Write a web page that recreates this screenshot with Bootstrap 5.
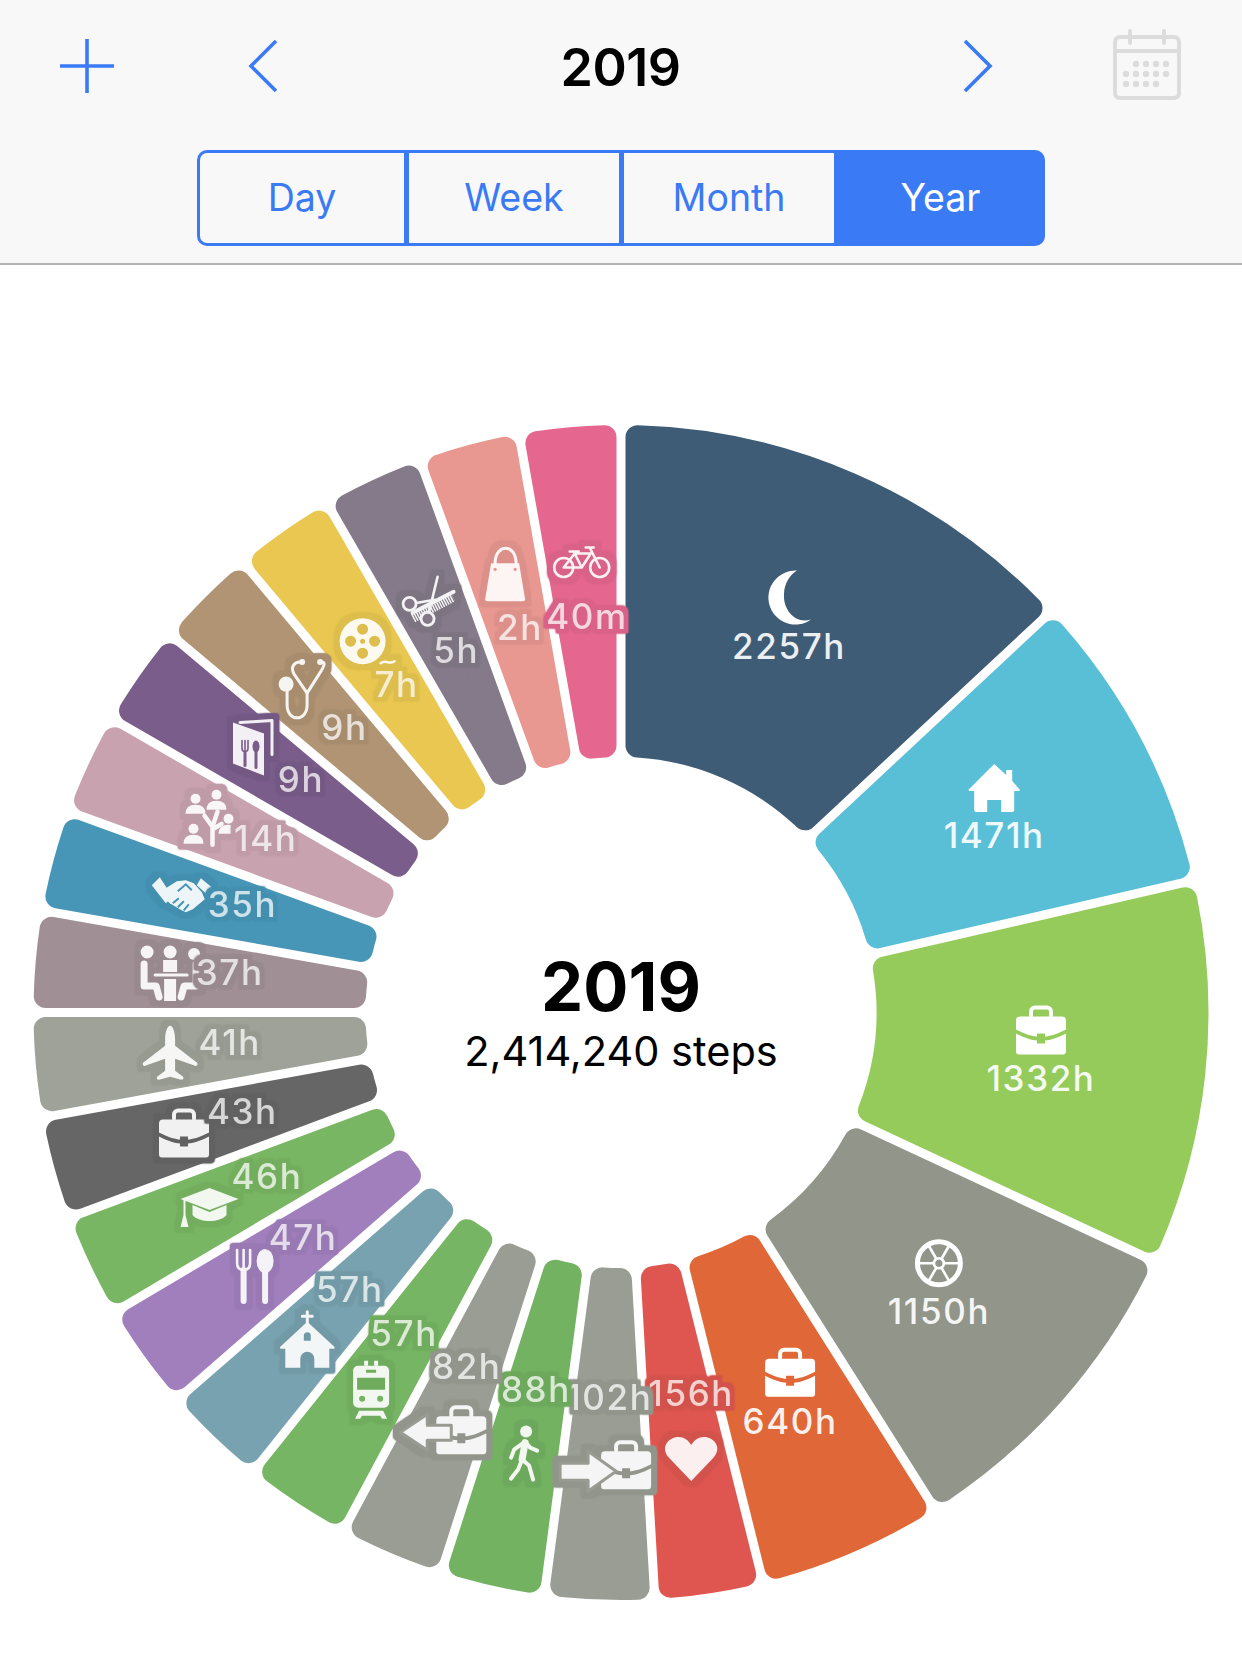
<!DOCTYPE html>
<html lang="en">
<head>
  <meta charset="UTF-8">
  <title>2019</title>
  <link href="https://cdn.jsdelivr.net/npm/bootstrap@5.3.0/dist/css/bootstrap.min.css" rel="stylesheet">
  <style>
    body { background: #fff; font-family: Inter, "Liberation Sans", sans-serif; width: 1242px; }
    .top-bar { background: #f8f8f8; border-bottom: 2px solid #b4b4b4; height: 265px; padding-top: 31px; }
    .top-row { height: 70px; padding: 0 60px; }
    .top-row svg { overflow: visible; }
    .chev-prev { margin-left: 136px; }
    .cal-icon { margin-left: 121px; }
    .top-title { font-size: 52px; font-weight: 600; color: #000; line-height: 70px; letter-spacing: -.5px; padding-top: 4px; }
    .seg { width: 848px; height: 96px; margin-top: 49px; }
    .seg .btn {
      --bs-btn-color: #3a7af5; --bs-btn-border-color: #3a7af5;
      --bs-btn-active-bg: #3a7af5; --bs-btn-active-border-color: #3a7af5;
      --bs-btn-border-radius: 10px; --bs-btn-border-width: 3px;
      font-size: 37.5px; flex: 1 1 0; display: flex; align-items: center; justify-content: center; padding: 0;
    }
    .seg .btn:first-child { flex: 0 0 210px; }
    .seg .btn:last-child { flex: 0 0 209px; }
    .chart { display: block; }
    .lbl { font-family: Inter, "Liberation Sans", sans-serif; font-size: 35px; font-weight: 500; text-anchor: middle; dominant-baseline: central; letter-spacing: 1.6px; }
    .big-year { font-family: Inter, "Liberation Sans", sans-serif; font-size: 67px; font-weight: 700; text-anchor: middle; }
    .steps { font-family: Inter, "Liberation Sans", sans-serif; font-size: 41.5px; text-anchor: middle; }
  </style>
</head>
<body>
  <div class="top-bar">
    <div class="top-row d-flex align-items-center">
      <svg width="54" height="54" viewBox="0 0 54 54" fill="none" stroke="#3a7af5" stroke-width="3.6"><path d="M27 0V54M0 27H54"/></svg>
      <svg class="chev-prev" width="27" height="52" viewBox="0 0 27 52" fill="none" stroke="#3a7af5" stroke-width="3.6"><path d="M26 1L1 26L26 51"/></svg>
      <div class="top-title flex-grow-1 text-center">2019</div>
      <svg width="27" height="52" viewBox="0 0 27 52" fill="none" stroke="#3a7af5" stroke-width="3.6"><path d="M1 1L26 26L1 51"/></svg>
      <svg class="cal-icon" width="70" height="70" viewBox="0 0 70 70">
        <g fill="none" stroke="#dcdcdc" stroke-width="4">
          <rect x="3" y="6" width="64" height="61" rx="5"/>
          <path d="M3 20H67"/>
          <path d="M18 0V12M52 0V12" stroke-linecap="round"/>
        </g>
        <g id="calDots" fill="#dcdcdc"></g>
      </svg>
    </div>
    <div class="btn-group seg d-flex mx-auto" role="group">
      <button type="button" class="btn btn-outline-primary">Day</button>
      <button type="button" class="btn btn-outline-primary">Week</button>
      <button type="button" class="btn btn-outline-primary">Month</button>
      <button type="button" class="btn btn-outline-primary active">Year</button>
    </div>
  </div>

  <svg id="chart" class="chart" width="1242" height="1403" viewBox="0 265 1242 1403"></svg>

  <script src="https://cdn.jsdelivr.net/npm/bootstrap@5.3.0/dist/js/bootstrap.bundle.min.js"></script>
  <script>
    const CX = 621, CY = 1012.5, R = 587.5, RI = 255.5, GAP = 9, CORNER = 12;
    const S = 1242 / 1168; // label positions were read off a 1168 wide copy

    // calendar dots
    let dots = "";
    [[1,2,3,4],[0,1,2,3,4],[0,1,2,3]].forEach((row, r) => row.forEach(c => {
      dots += `<circle cx="${14 + c * 10}" cy="${33 + r * 10}" r="3.2"/>`;
    }));
    document.getElementById("calDots").innerHTML = dots;

    // icons, drawn around 0,0. c is the segment colour, for cut-outs
    const line = (d, w) => `<path d="${d}" fill="none" stroke="#fff" stroke-width="${w}" stroke-linecap="round" stroke-linejoin="round"/>`;
    const caseShape = c => line("M-10-15V-19a4 4 0 0 1 4-4H6a4 4 0 0 1 4 4V-15", 4) +
      `<path d="M-25-10a4 4 0 0 1 4-4H21a4 4 0 0 1 4 4V-1C15 4 8 6 4 6V3H-4V6C-8 6-15 4-25-1Z"/>` +
      `<path d="M-25 3C-15 8-9 9.5-4 10V13H4V10C9 9.5 15 8 25 3V21a3 3 0 0 1-3 3H-22a3 3 0 0 1-3-3Z"/>`;
    const person = (x, y) => `<circle cx="${x}" cy="${y - 6}" r="5"/><path d="M${x - 10} ${y + 9}Q${x - 10} ${y} ${x} ${y}Q${x + 10} ${y} ${x + 10} ${y + 9}Z"/>`;

    const icons = {
      moon: () => `<path d="M8-27A27 27 0 1 0 22 22C6 27-6 12-5-3-5-14 1-23 8-27Z"/>`,
      house: () => `<path d="M0-24L12-13V-18H18V-7L25 1a1 1 0 0 1-1 2H20V22a2 2 0 0 1-2 2H7V12H-7V24H-18a2 2 0 0 1-2-2V3H-24a1 1 0 0 1-1-2Z"/>`,
      briefcase: caseShape,
      wheel: () => `<circle r="21.5" fill="none" stroke="#fff" stroke-width="5"/><circle r="5" fill="none" stroke="#fff" stroke-width="2.6"/>` +
        line("M5 0H20M-5 0H-20M2.5 4.3L10 17.3M-2.5-4.3L-10-17.3M2.5-4.3L10-17.3M-2.5 4.3L-10 17.3", 2.6),
      heart: () => `<path d="M0 22L-22-1C-32-12-22-22-13-22-7-22-3-19 0-14 3-19 7-22 13-22 22-22 32-12 22-1Z"/>`,
      caseIn: c => `<g transform="translate(20 0)">${caseShape(c)}</g>` +
        `<path d="M-46-2H-18V-14L10 6-18 26V15H-46Z" stroke="${c}" stroke-width="3" stroke-linejoin="round"/>`,
      caseOut: c => `<g transform="translate(20 0)">${caseShape(c)}</g>` +
        `<path d="M-41 2L-14-16V-5H10V10H-14V20Z" stroke="${c}" stroke-width="3" stroke-linejoin="round"/>`,
      walker: () => `<circle cx="4" cy="-22" r="6"/>` + line("M3-11L0 6", 7) +
        line("M3-12L-8-4-11 4M3-12L8-6 15-3M0 6L7 12 11 26M0 6L-4 16-11 25", 4),
      train: c => `<path fill-rule="evenodd" d="M-13-24H13a5 5 0 0 1 5 5V13a5 5 0 0 1-5 5H-13a5 5 0 0 1-5-5V-19a5 5 0 0 1 5-5ZM-14-12V0H14V-12ZM-5-20V-17H5V-20Z"/>` +
        `<circle cx="-9" cy="9" r="3" fill="${c}"/><circle cx="9" cy="9" r="3" fill="${c}"/>` +
        `<path d="M-7-29H-3V-24H-7ZM3-29H7V-24H3Z"/><path d="M-12 21H12L16 29H11L9 26H-9L-11 29H-16Z"/>`,
      church: () => `<path fill-rule="evenodd" d="M0-18L27 7a1.2 1.2 0 0 1-1 2H22V28H7V19a7 7 0 0 0-14 0V28H-22V9H-26a1.2 1.2 0 0 1-1-2ZM-3.5-4V1H3.5V-4a3.5 3.5 0 0 0-7 0Z"/>` + line("M0-28V-17M-5-23.500H5", 3),
      cutlery: () => line("M-17-26V-13Q-17-6-10.500-6T-4-13V-26M-10.500-26V-8", 2.6) + line("M-10.500-6V25", 6) +
        `<ellipse cx="11" cy="-15" rx="8.500" ry="12"/>` + line("M11-6V25", 6),
      cap: () => `<path d="M0-19L29-8 0 3-29-8Z"/><path d="M-17-2L0 5 17-2V8C10 16-10 16-17 8Z"/><path d="M-26-7H-24V8L-21 20H-29L-26 8Z"/>`,
      plane: () => `<path d="M0-27C3-27 5-20 5-13V-7L27 10C28 11 27 14 25 13L5 6V18L13 24C14 26 13 27 11 27L0 24-11 27C-13 27-14 26-13 24L-5 18V6L-25 13C-27 14-28 11-27 10L-5-7V-13C-5-20-3-27 0-27Z"/>`,
      meeting: () => `<circle cx="-23" cy="-21" r="6.500"/><circle cx="0" cy="-21" r="6.500"/><circle cx="24" cy="-19" r="6"/>` +
        `<path d="M-7-13H7V-1H-7Z"/>` + line("M-15 2H17", 3) + line("M-26-9V13H-14L-11 24", 7) + line("M26-9V13H14L11 24", 7) + `<path d="M-6 6H6V28H-6Z"/>`,
      hands: c => `<path d="M-30-10L-22-18-9 2-16 8Z"/><path d="M19-17L30-8 25-1 15-10Z"/>` +
        `<path d="M-16-7L-5-14 4-15 12-12 20-3 23 4 11 14 4 17-2 14-12 8-19 1Z"/>` +
        `<path d="M-4-4L4-11 10-5M-9 8L-3 3M-4 12L2 6M2 15L7 9" fill="none" stroke="${c}" stroke-width="2"/>`,
      tree: () => person(7, -18) + person(-14, -14) + person(19, 6) + person(-16, 16) +
        line("M3 26V8L-5-3M3 8L8-7M4 10L12 5", 4.5),
      menu: c => line("M-12-25L20-27V7", 3) + `<path d="M-19-25L12-14V28L-19 16Z"/>` +
        `<g fill="none" stroke="${c}" stroke-linecap="round"><path d="M-10-7V1Q-10 4-7 4T-4 1V-7M-7-7V2" stroke-width="1.600"/><path d="M-7 4V18" stroke-width="3"/><path d="M4-2V20" stroke-width="3"/></g><ellipse cx="4" cy="-1" rx="3.500" ry="6" fill="${c}"/>`,
      stetho: () => `<circle cx="-18" cy="-5" r="7.500"/>` +
        line("M-2-27C-10-28-14-22-10-15L3 4 15-15C21-24 22-28 16-27", 3) + line("M3 4V16C3 33-17 33-17 16V-4", 3) +
        `<circle cx="-2" cy="-27" r="3"/><circle cx="16" cy="-27" r="3"/>`,
      reel: c => `<path fill-rule="evenodd" d="M-23 0a23 23 0 1 0 46 0a23 23 0 1 0-46 0ZM-5.500-12a5.500 5.500 0 1 0 11 0a5.500 5.500 0 1 0-11 0ZM-5.500 12a5.500 5.500 0 1 0 11 0a5.500 5.500 0 1 0-11 0ZM-17.500 0a5.500 5.500 0 1 0 11 0a5.500 5.500 0 1 0-11 0ZM6.500 0a5.500 5.500 0 1 0 11 0a5.500 5.500 0 1 0-11 0ZM-2.500 0a2.500 2.500 0 1 0 5 0a2.500 2.500 0 1 0-5 0Z"/>` +
        line("M18 22C24 18 26 24 32 20", 2.5),
      scissors: c => line("M-17 12L24-9", 4) + `<path d="M-18 14L22-7" fill="none" stroke="#fff" stroke-width="9" stroke-dasharray="1.500 1" transform="translate(1.500 3.500)"/>` +
        line("M8-24L-1 13M-12 2L5-1", 2.6) + `<circle cx="-20" cy="3" r="6.500" fill="${c}" stroke="#fff" stroke-width="2.800"/><circle cx="-2" cy="18" r="6.500" fill="${c}" stroke="#fff" stroke-width="2.800"/>`,
      bag: c => line("M-10-8V-12C-10-32 11-32 11-12V-8", 3) + `<path d="M-14-12H14L20 24a2 2 0 0 1-2 2H-18a2 2 0 0 1-2-2Z"/>` +
        `<circle cx="-10" cy="-6" r="1.600" fill="${c}"/><circle cx="10" cy="-6" r="1.600" fill="${c}"/>`,
      bike: () => `<g fill="none" stroke="#fff" stroke-width="2.600" stroke-linecap="round" stroke-linejoin="round"><circle cx="-18" cy="6" r="9.500"/><circle cx="18" cy="6" r="9.500"/><path d="M-18 6L-7-8H9M8-14L18 6M-8-10L0 6H-18M0 6L9-8M-12-10H-3M4-14H12"/></g>`
    };

    // a: where the segment ends, clockwise from 12 o'clock. ix,iy and lx,ly on the 1168 copy
    const segs = [
      { a: 47, c: "#3e5c76", t: "2257h", i: "moon", ix: 742, iy: 562, lx: 742, ly: 607 },
      { a: 77, c: "#59bfd7", t: "1471h", i: "house", ix: 935, iy: 741, lx: 935, ly: 785 },
      { a: 115, c: "#94cb5a", t: "1332h", i: "briefcase", ix: 979, iy: 969, lx: 979, ly: 1014 },
      { a: 147.7, c: "#92958a", t: "1150h", i: "wheel", ix: 883, iy: 1188, lx: 883, ly: 1233 },
      { a: 166, c: "#e06737", t: "640h", i: "briefcase", ix: 743, iy: 1291, lx: 743, ly: 1336 },
      { a: 176.7, c: "#df5650", t: "156h", i: "heart", ix: 650, iy: 1372, lx: 650, ly: 1310 },
      { a: 187.5, c: "#9a9d93", t: "102h", i: "caseIn", ix: 570, iy: 1378, lx: 573, ly: 1314 },
      { a: 197.8, c: "#72b261", t: "88h", i: "walker", ix: 491, iy: 1367, lx: 504, ly: 1306 },
      { a: 208.2, c: "#9a9d93", t: "82h", i: "caseOut", ix: 415, iy: 1345, lx: 439, ly: 1285 },
      { a: 218.7, c: "#76b563", t: "57h", i: "train", ix: 349, iy: 1307, lx: 380, ly: 1254 },
      { a: 228.9, c: "#78a2af", t: "57h", i: "church", ix: 289, iy: 1260, lx: 329, ly: 1212 },
      { a: 239.4, c: "#a17fbc", t: "47h", i: "cutlery", ix: 239, iy: 1200, lx: 285, ly: 1163 },
      { a: 249.6, c: "#79b663", t: "46h", i: "cap", ix: 197, iy: 1135, lx: 251, ly: 1106 },
      { a: 259.7, c: "#666666", t: "43h", i: "briefcase", ix: 173, iy: 1066, lx: 228, ly: 1045 },
      { a: 270, c: "#9fa298", t: "41h", i: "plane", ix: 160, iy: 990, lx: 216, ly: 980 },
      { a: 280, c: "#a09095", t: "37h", i: "meeting", ix: 160, iy: 915, lx: 216, ly: 914 },
      { a: 290, c: "#4796b8", t: "35h", i: "hands", ix: 171, iy: 842, lx: 228, ly: 850 },
      { a: 300, c: "#c9a2b0", t: "14h", i: "tree", ix: 197, iy: 770, lx: 250, ly: 788 },
      { a: 310, c: "#7a5d8b", t: "9h", i: "menu", ix: 237, iy: 703, lx: 283, ly: 733 },
      { a: 320, c: "#b09474", t: "9h", i: "stetho", ix: 286, iy: 648, lx: 324, ly: 684 },
      { a: 330, c: "#e9c750", t: "7h", i: "reel", ix: 341, iy: 603, lx: 373, ly: 643 },
      { a: 340, c: "#847a89", t: "5h", i: "scissors", ix: 404, iy: 565, lx: 429, ly: 611 },
      { a: 350, c: "#e89890", t: "2h", i: "bag", ix: 475, iy: 541, lx: 489, ly: 590 },
      { a: 360, c: "#e5668f", t: "40m", i: "bike", ix: 547, iy: 528, lx: 552, ly: 579 }
    ];

    const pt = (rad, deg) => {
      const t = deg * Math.PI / 180;
      return (CX + rad * Math.sin(t)).toFixed(2) + " " + (CY - rad * Math.cos(t)).toFixed(2);
    };

    // the wedge is shrunk by the corner radius, the round stroke grows it back with round corners
    function wedge(a0, a1) {
      const ro = R - CORNER, ri = RI + CORNER, off = GAP / 2 + CORNER;
      const dO = Math.asin(off / ro) * 180 / Math.PI, dI = Math.asin(off / ri) * 180 / Math.PI;
      const large = a1 - a0 > 180 ? 1 : 0;
      return `M${pt(ro, a0 + dO)}A${ro} ${ro} 0 ${large} 1 ${pt(ro, a1 - dO)}L${pt(ri, a1 - dI)}A${ri} ${ri} 0 ${large} 0 ${pt(ri, a0 + dI)}Z`;
    }

    function darker(hex, f) {
      const n = parseInt(hex.slice(1), 16);
      const ch = s => Math.round(((n >> s) & 255) * f).toString(16).padStart(2, "0");
      return "#" + ch(16) + ch(8) + ch(0);
    }

    function halo(id, color, box, rad) {
      return `<filter id="${id}" x="${box[0]}" y="${box[1]}" width="${box[2]}" height="${box[3]}" color-interpolation-filters="sRGB">
        <feMorphology in="SourceAlpha" operator="dilate" radius="${rad}"/>
        <feGaussianBlur stdDeviation="1.2"/>
        <feComponentTransfer result="s"><feFuncA type="linear" slope="3"/></feComponentTransfer>
        <feFlood flood-color="${color}"/>
        <feComposite in2="s" operator="in" result="h"/>
        <feMerge><feMergeNode in="h"/><feMergeNode in="SourceGraphic"/></feMerge>
      </filter>`;
    }

    let defs = "", shapes = "", marks = "", start = 0;
    segs.forEach((s, n) => {
      shapes += `<path d="${wedge(start, s.a)}" fill="${s.c}" stroke="${s.c}" stroke-width="${CORNER * 2}" stroke-linejoin="round"/>`;
      start = s.a;
      const small = n > 4;
      if (small) {
        const h = darker(s.c, .95);
        defs += halo("ht" + n, h, [-.1, -.04, 1.2, 1.08], 4) + halo("hi" + n, h, [-.35, -.35, 1.7, 1.7], 5);
      }
      const draw = icons[s.i](s.c);
      marks += `<g ${small ? `filter="url(#hi${n})"` : ""} transform="translate(${(s.ix * S).toFixed(1)} ${(s.iy * S).toFixed(1)})"><g fill="#fff" opacity="${small ? .91 : 1}">${draw}</g></g>`;
      marks += `<g ${small ? `filter="url(#ht${n})"` : ""}><text class="lbl" x="${(s.lx * S).toFixed(1)}" y="${(s.ly * S).toFixed(1)}" fill="#fff" fill-opacity="${small ? .74 : .92}">${s.t}</text></g>`;
    });

    document.getElementById("chart").innerHTML = `<defs>${defs}</defs>${shapes}${marks}
      <text class="big-year" x="${CX}" y="1011" fill="#000">2019</text>
      <text class="steps" x="${CX}" y="1066" fill="#000">2,414,240 steps</text>`;
  </script>
</body>
</html>
